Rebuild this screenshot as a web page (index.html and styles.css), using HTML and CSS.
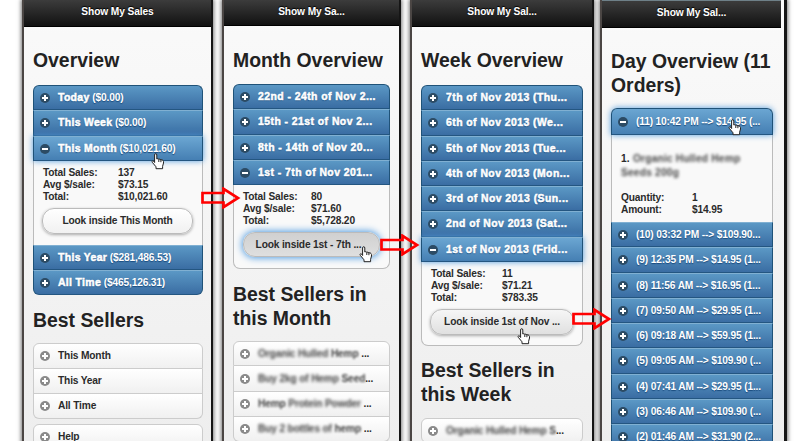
FILE: index.html
```html
<!DOCTYPE html>
<html lang="en">
<head>
<meta charset="utf-8">
<title>Show My Sales</title>
<link rel="stylesheet" href="styles.css">
</head>
<body>
<svg width="0" height="0" class="defs">
  <symbol id="plus" viewBox="0 0 10 10"><circle cx="5" cy="5" r="5" fill="currentColor"/><path class="mark" d="M5 2v6M2 5h6"/></symbol>
  <symbol id="minus" viewBox="0 0 10 10"><circle cx="5" cy="5" r="5" fill="currentColor"/><path class="mark" d="M2 5h6"/></symbol>
  <symbol id="arrow" viewBox="0 0 40 22"><path d="M1.5 6H22.500V1.800L37 11L22.500 20.200V15.500H1.500Z" fill="none" stroke="#f00" stroke-width="2.700"/></symbol>
  <symbol id="hand" viewBox="0 0 14 17"><path d="M3.600 9.500V2Q3.600.7 4.700.7T5.800 2V6Q7 5.200 7.800 6.300Q9.200 5.600 9.900 6.900Q11.200 6.300 12 7.500Q12.700 8.300 12.500 10L11.600 13.300V15.700H5V13.800L1.300 9.300Q.7 8 1.600 7.700T3.600 9.500M7.800 6.500V9M9.900 7V9.200" fill="#fff" stroke="#222" stroke-width="1" stroke-linejoin="round"/></symbol>
</svg>
<main class="stage">
  <section class="phone p1">
    <header class="bar">Show My Sales</header>
    <h1>Overview</h1>
    <div class="list blue">
      <div class="row"><svg><use href="#plus"/></svg><span><b>Today</b> ($0.00)</span></div>
      <div class="row"><svg><use href="#plus"/></svg><span><b>This Week</b> ($0.00)</span></div>
      <div class="row glow"><svg><use href="#minus"/></svg><span><b>This Month</b> ($10,021.60)</span></div>
      <div class="detail">
        <dl><dt>Total Sales:</dt><dd>137</dd><dt>Avg $/sale:</dt><dd>$73.15</dd><dt>Total:</dt><dd>$10,021.60</dd></dl>
        <button>Look inside This Month</button>
      </div>
      <div class="row"><svg><use href="#plus"/></svg><span><b>This Year</b> ($281,486.53)</span></div>
      <div class="row"><svg><use href="#plus"/></svg><span><b>All Time</b> ($465,126.31)</span></div>
    </div>
    <h2>Best Sellers</h2>
    <div class="list light">
      <div class="row"><svg><use href="#plus"/></svg><span>This Month</span></div>
      <div class="row"><svg><use href="#plus"/></svg><span>This Year</span></div>
      <div class="row"><svg><use href="#plus"/></svg><span>All Time</span></div>
    </div>
    <div class="list light extra">
      <div class="row"><svg><use href="#plus"/></svg><span>Help</span></div>
    </div>
  </section>

  <section class="phone p2">
    <header class="bar">Show My Sa...</header>
    <h1>Month Overview</h1>
    <div class="list blue">
      <div class="row"><svg><use href="#plus"/></svg><span><b>22nd - 24th of Nov 2...</b></span></div>
      <div class="row"><svg><use href="#plus"/></svg><span><b>15th - 21st of Nov 2...</b></span></div>
      <div class="row"><svg><use href="#plus"/></svg><span><b>8th - 14th of Nov 20...</b></span></div>
      <div class="row"><svg><use href="#minus"/></svg><span><b>1st - 7th of Nov 201...</b></span></div>
      <div class="detail last">
        <dl><dt>Total Sales:</dt><dd>80</dd><dt>Avg $/sale:</dt><dd>$71.60</dd><dt>Total:</dt><dd>$5,728.20</dd></dl>
        <button class="pressed">Look inside 1st - 7th ...</button>
      </div>
    </div>
    <h2>Best Sellers in this Month</h2>
    <div class="list light">
      <div class="row"><svg><use href="#plus"/></svg><span><i>Organic Hulled</i> <i class="soft">Hemp</i> ...</span></div>
      <div class="row"><svg><use href="#plus"/></svg><span><i>Buy 2kg of Hemp</i> <i class="soft">Seed</i>...</span></div>
      <div class="row"><svg><use href="#plus"/></svg><span><i class="soft">Hemp</i> <i>Protein Powder</i> ...</span></div>
      <div class="row"><svg><use href="#plus"/></svg><span><i>Buy 2 bottles of</i> <i class="soft">hemp</i> ...</span></div>
    </div>
  </section>

  <section class="phone p3">
    <header class="bar">Show My Sal...</header>
    <h1>Week Overview</h1>
    <div class="list blue">
      <div class="row"><svg><use href="#plus"/></svg><span><b>7th of Nov 2013 (Thu...</b></span></div>
      <div class="row"><svg><use href="#plus"/></svg><span><b>6th of Nov 2013 (We...</b></span></div>
      <div class="row"><svg><use href="#plus"/></svg><span><b>5th of Nov 2013 (Tue...</b></span></div>
      <div class="row"><svg><use href="#plus"/></svg><span><b>4th of Nov 2013 (Mon...</b></span></div>
      <div class="row"><svg><use href="#plus"/></svg><span><b>3rd of Nov 2013 (Sun...</b></span></div>
      <div class="row"><svg><use href="#plus"/></svg><span><b>2nd of Nov 2013 (Sat...</b></span></div>
      <div class="row glow"><svg><use href="#minus"/></svg><span><b>1st of Nov 2013 (Frid...</b></span></div>
      <div class="detail last">
        <dl><dt>Total Sales:</dt><dd>11</dd><dt>Avg $/sale:</dt><dd>$71.21</dd><dt>Total:</dt><dd>$783.35</dd></dl>
        <button class="hover">Look inside 1st of Nov ...</button>
      </div>
    </div>
    <h2>Best Sellers in this Week</h2>
    <div class="list light">
      <div class="row"><svg><use href="#plus"/></svg><span><i>Organic Hulled Hemp</i> <i class="soft">S</i>...</span></div>
    </div>
  </section>

  <section class="phone p4">
    <header class="bar">Show My Sal...</header>
    <h1>Day Overview (11 Orders)</h1>
    <div class="list blue">
      <div class="row glow first"><svg><use href="#minus"/></svg><span>(11) 10:42 PM --&gt; $14.95 (...</span></div>
      <div class="detail">
        <p>1. <i>Organic Hulled Hemp</i> <i>Seeds 200g</i></p>
        <dl><dt>Quantity:</dt><dd>1</dd><dt>Amount:</dt><dd>$14.95</dd></dl>
      </div>
      <div class="row"><svg><use href="#plus"/></svg><span>(10) 03:32 PM --&gt; $109.90...</span></div>
      <div class="row"><svg><use href="#plus"/></svg><span>(9) 12:35 PM --&gt; $14.95 (1...</span></div>
      <div class="row"><svg><use href="#plus"/></svg><span>(8) 11:56 AM --&gt; $16.95 (1...</span></div>
      <div class="row"><svg><use href="#plus"/></svg><span>(7) 09:50 AM --&gt; $29.95 (1...</span></div>
      <div class="row"><svg><use href="#plus"/></svg><span>(6) 09:18 AM --&gt; $59.95 (1...</span></div>
      <div class="row"><svg><use href="#plus"/></svg><span>(5) 09:05 AM --&gt; $109.90 (...</span></div>
      <div class="row"><svg><use href="#plus"/></svg><span>(4) 07:41 AM --&gt; $29.95 (1...</span></div>
      <div class="row"><svg><use href="#plus"/></svg><span>(3) 06:46 AM --&gt; $109.90 (...</span></div>
      <div class="row"><svg><use href="#plus"/></svg><span>(2) 01:46 AM --&gt; $31.90 (2...</span></div>
    </div>
  </section>

  <svg class="arrow a1"><use href="#arrow"/></svg>
  <svg class="arrow a2"><use href="#arrow"/></svg>
  <svg class="arrow a3"><use href="#arrow"/></svg>
  <svg class="hand c1"><use href="#hand"/></svg>
  <svg class="hand c2"><use href="#hand"/></svg>
  <svg class="hand c3"><use href="#hand"/></svg>
  <svg class="hand c4"><use href="#hand"/></svg>
</main>
</body>
</html>
```
FILE: styles.css
```css
* { box-sizing: border-box; }
body { margin: 0; background: #fff; overflow: hidden; font: bold 10.2px/12px "Liberation Sans", Arial, sans-serif; letter-spacing: -.16px; color: #2b2b2b; }
.defs { position: absolute; }
.stage { position: relative; display: flex; width: 796px; height: 441px; overflow: hidden; padding-left: 22px; }

.phone { flex: none; height: 460px; background: linear-gradient(#fafafa, #eee 441px); border: solid #4b4644; border-width: 0 2px; border-right-color: #151515; box-shadow: 0 0 4px 1px #777; padding: 0 9px; }
.p1 { width: 191px; }
.p2 { width: 179px; margin-left: 9px; }
.p3 { width: 184px; margin-left: 9px; }
.p4 { width: 187px; margin-left: 6px; padding-right: 12px; border-right-width: 3px; }

.bar { height: 27px; margin: 0 -9px; padding-top: 6px; background: linear-gradient(#3c3c3c, #111); border-bottom: 1px solid #000; color: #fff; font-size: 10.2px; letter-spacing: -.1px; text-align: center; text-shadow: 0 -1px 1px #000; }
.p2 .bar { height: 26px; }
.p4 .bar { height: 28px; margin-right: -9px; border-top: 1px solid #6e8088; }

h1, h2 { margin: 0; font-size: 19.4px; line-height: 24px; letter-spacing: 0; color: #222; }
h1 { margin-top: 21px; margin-bottom: 13px; white-space: nowrap; }
.p2 h1 { margin-top: 22px; margin-bottom: 12px; }
.p4 h1 { margin-top: 21px; margin-bottom: 11px; white-space: normal; margin-right: -8px; }
.p1 h2 { margin: 13px 0 11px; }
.p2 h2 { margin: 14px 0 11px; line-height: 23.500px; }
.p3 h2 { margin: 12px 0 12px; }

.list { border-radius: 6px; }
.p1 .list { width: 170px; }
.p2 .list { width: 157px; }
.p3 .list { width: 162px; }
.p4 .list { width: 162px; }
.row { display: flex; align-items: center; height: 25.250px; padding: 1px 0 0 6px; border: 1px solid #1f5278; border-top-color: #80b0d2; border-bottom-color: #245681; white-space: nowrap; }
.row svg { flex: none; width: 10px; height: 10px; margin-right: 8px; color: #2c4b64; }
.row:first-child { border-top-left-radius: 6px; border-top-right-radius: 6px; }
.row:last-child { border-bottom-left-radius: 6px; border-bottom-right-radius: 6px; }
.blue .row { background: linear-gradient(#5b98c5, #3a6da3); color: #fff; text-shadow: 0 1px 1px #194b7e; }
.blue .row:first-child { border-top-color: #1f5278; }
.blue .glow { position: relative; background: linear-gradient(#6ba6d2, #457fb3); box-shadow: 0 0 6px #519bdc; }
.mark { stroke: #fff; stroke-width: 2; fill: none; }
.row b { font-size: 10.400px; letter-spacing: .46px; -webkit-text-stroke: .5px #fff; }
.p1 .row b { letter-spacing: .35px; }
.first { height: 27px; }

.light .row { background: linear-gradient(#fff, #f0f0f0); border: 1px solid #ccc; border-top-width: 0; }
.light .row svg { color: #8a8a8a; }
.light .row:first-child { border-top-width: 1px; }
.light i, .detail i { font-style: normal; filter: blur(1.700px); display: inline-block; color: #444; }
.light i.soft { filter: blur(1px); }
.extra { margin-top: 5px; }

.detail { border: 1px solid #bbb; border-width: 0 1px; background: #f9f9f9; padding: 6px 8px 0 9px; height: 84px; }
.detail.last { border-bottom-width: 1px; border-radius: 0 0 7px 7px; }
dl { display: grid; grid-template-columns: 75px 1fr; margin: 0; }
.p2 dl { grid-template-columns: 68px 1fr; }
.p3 dl, .p4 dl { grid-template-columns: 71px 1fr; }
dd { margin: 0; }
button { display: block; width: 151px; height: 26px; margin: 5px 0 0 -1px; padding: 0; border: 1px solid #bbb; border-radius: 12px; background: linear-gradient(#fff, #f1f1f1); box-shadow: 0 1px 3px #aaa; font: inherit; letter-spacing: inherit; color: #2b2b2b; white-space: nowrap; }
.p2 button { width: 137px; height: 25px; margin-left: 0; padding-right: 6px; }
.p3 button { width: 144px; }
button.pressed { background: linear-gradient(#d0d0d0, #dfdfdf); box-shadow: 0 0 7px 1px #529ce0; }
button.hover { background: linear-gradient(#f6f6f6, #e0e0e0); }
.p4 .detail { height: 87px; padding-top: 17px; }
.p4 p { margin: 0; line-height: 14px; letter-spacing: .2px; }
.p4 dl { margin-top: 12px; }

.arrow { position: absolute; width: 40px; height: 22px; }
.a1 { left: 201px; top: 187px; }
.a2 { left: 380px; top: 234px; }
.a3 { left: 572px; top: 308px; }
.hand { position: absolute; width: 14px; height: 17px; }
.c1 { left: 151px; top: 153px; }
.c2 { left: 359px; top: 246px; }
.c3 { left: 517px; top: 328px; }
.c4 { left: 728px; top: 119px; }
```
